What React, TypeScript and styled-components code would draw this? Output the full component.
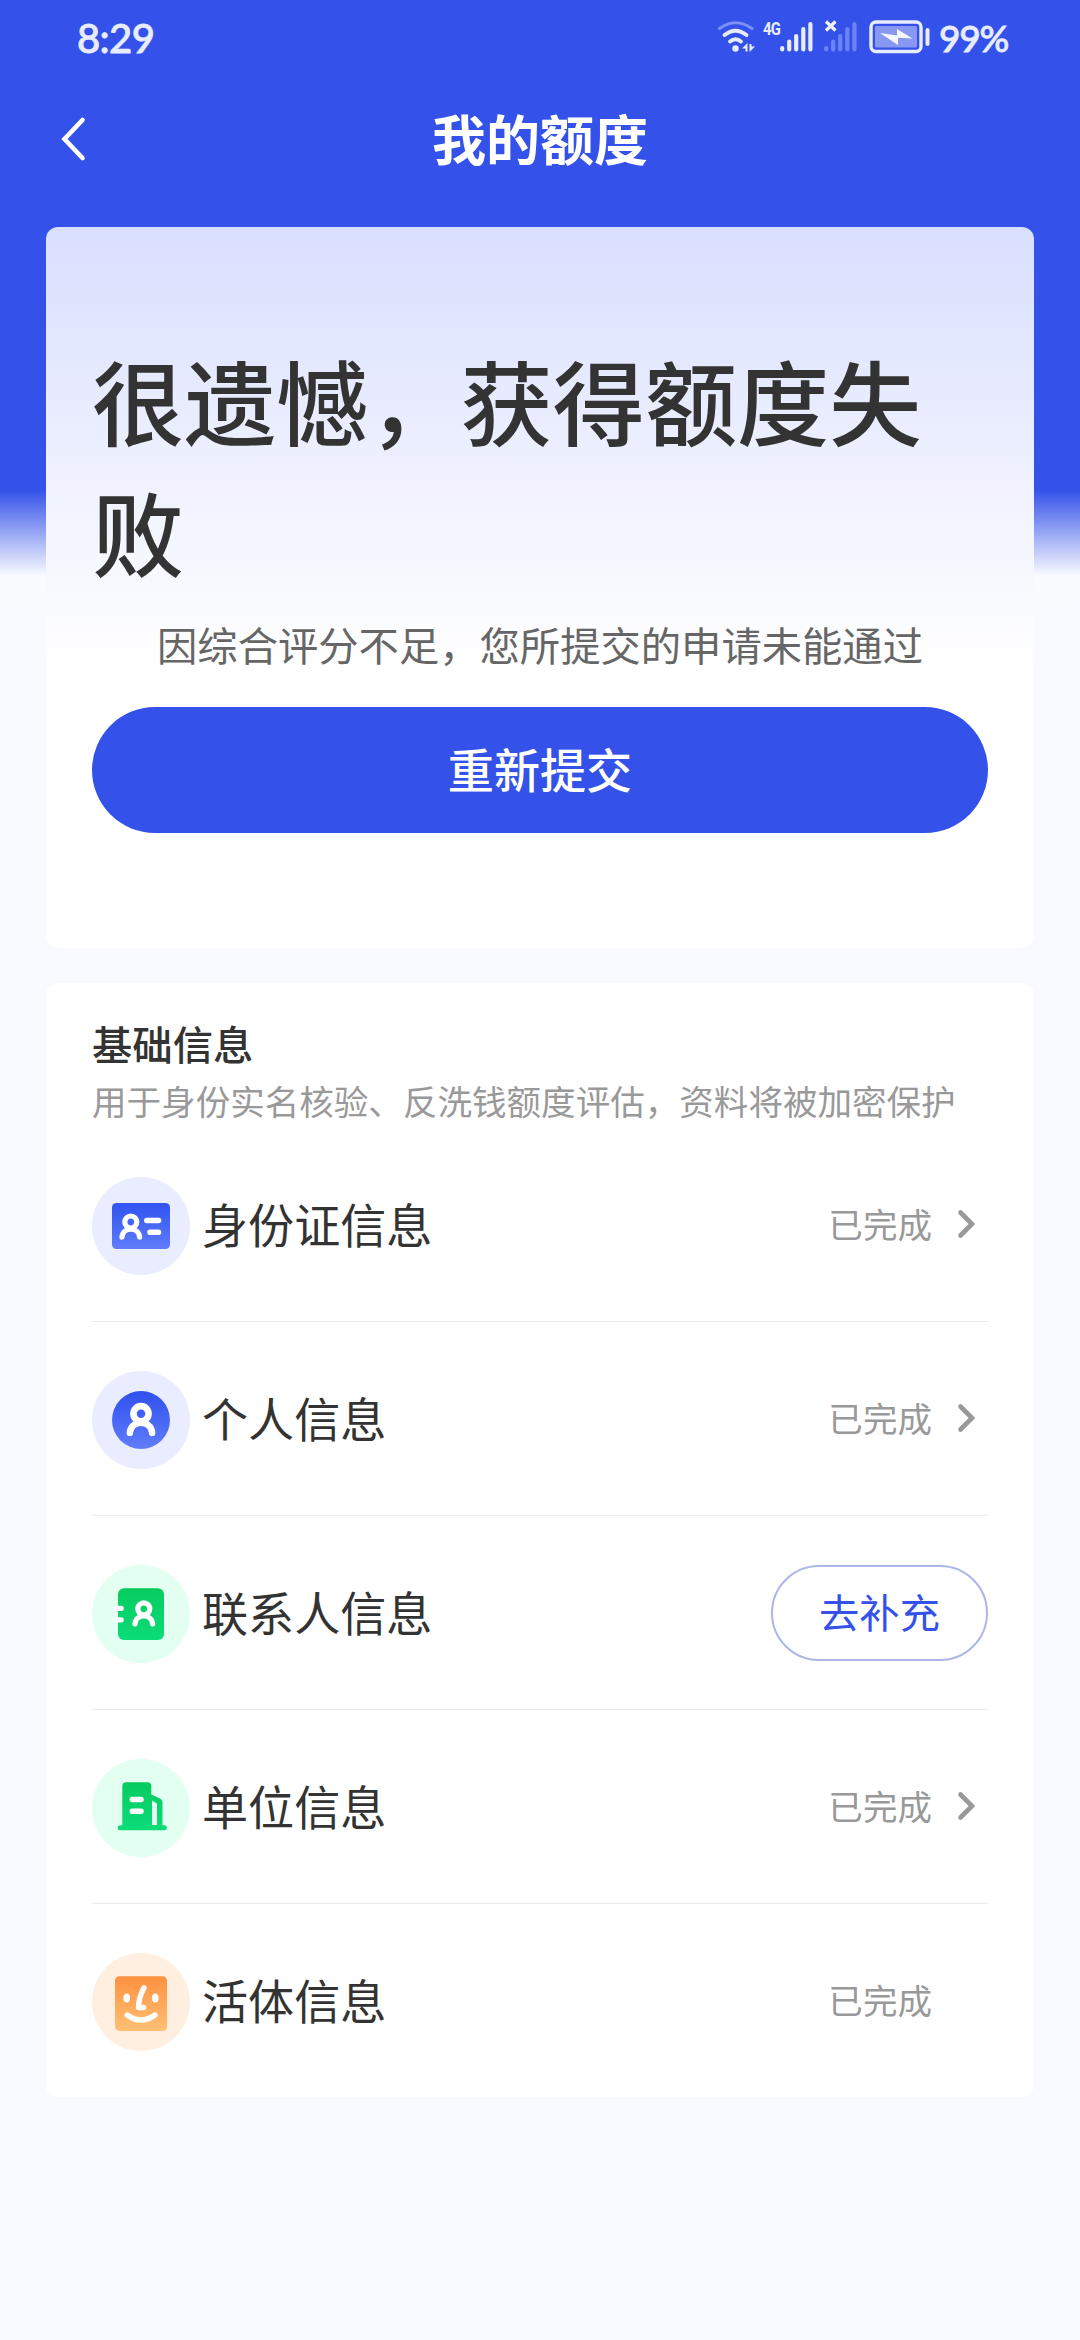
import React from "react";
import styled, { createGlobalStyle } from "styled-components";

const cjk = `"Noto Sans CJK SC", "Noto Sans", sans-serif`;
const blue = "#3452ea";

const GlobalStyle = createGlobalStyle`
  * { box-sizing: border-box; }
  body {
    margin: 0;
    background: #f9faff;
    font-family: ${cjk};
  }
`;

const Page = styled.div`
  width: 1080px;
  height: 2340px;
  overflow: hidden;
  background: linear-gradient(to bottom, ${blue} 0, ${blue} 490px, #fafbff 576px, #f9faff 620px);
`;

const StatusBar = styled.header`
  height: 72px;
  padding: 0 72px 0 77px;
  display: flex;
  justify-content: space-between;
  align-items: center;
  color: #e8ecff;
`;

const Clock = styled.span`
  font: 500 40px/72px Lato, ${cjk};
  padding-top: 3px;
  letter-spacing: -0.6px;
  -webkit-text-stroke: 0.8px currentColor;
`;

const StatusIcons = styled.div`
  padding-top: 1px;
  display: flex;
  align-items: center;
`;

const Percent = styled.span`
  width: 69px;
  margin-left: 9px;
  padding-top: 3px;
  font: 500 37px/72px Lato, ${cjk};
  letter-spacing: -1.2px;
  white-space: nowrap;
  -webkit-text-stroke: 0.8px currentColor;
`;

const NavBar = styled.nav`
  height: 155px;
  padding: 0 60px 19px;
  display: grid;
  grid-template-columns: 60px 1fr 60px;
  align-items: center;
`;

const BackButton = styled.button`
  width: 60px;
  height: 60px;
  padding: 0 0 2px;
  border: 0;
  background: none;
  display: flex;
  align-items: center;
`;

const PageTitle = styled.h1`
  margin: 0;
  padding-bottom: 4px;
  text-align: center;
  color: #fff;
  font-size: 54px;
  font-weight: 700;
  line-height: 132px;
`;

const Card = styled.section`
  margin: 0 46px;
  border-radius: 12px;
  background: #fff;
`;

const ResultCard = styled(Card)`
  height: 721px;
  padding: 107px 46px 0;
  background: linear-gradient(to bottom, #d9dffe 0%, #fff 61%);
`;

const ResultTitle = styled.h2`
  margin: 0;
  color: #333;
  font-size: 92.16px;
  font-weight: 500;
  line-height: 130.5px;
`;

const ResultReason = styled.p`
  margin: 21px 0 0;
  color: #666;
  font-size: 40.32px;
  line-height: 56px;
  text-align: center;
`;

const SubmitButton = styled.button`
  width: 100%;
  height: 126px;
  margin-top: 35px;
  padding: 0 0 3px;
  border: 0;
  border-radius: 63px;
  background: ${blue};
  color: #fff;
  font: 500 46.08px/123px ${cjk};
`;

const InfoCard = styled(Card)`
  height: 1114px;
  margin-top: 35px;
  padding: 32px 46px 0;
`;

const SectionTitle = styled.h3`
  margin: 0;
  color: #333;
  font-size: 40.32px;
  font-weight: 500;
  line-height: 56px;
`;

const SectionNote = styled.p`
  margin: 4px 0 0;
  color: #999;
  font-size: 34.56px;
  line-height: 50px;
  white-space: nowrap;
`;

const List = styled.ul`
  margin: 3px 0 0;
  padding: 0;
  list-style: none;
`;

const Row = styled.li`
  height: 194px;
  padding-top: 2px;
  display: flex;
  align-items: center;
  border-bottom: 1px solid #e9e9ec;
  &:last-child { border-bottom-color: transparent; }
`;

const IconDisc = styled.span<{ $tint: string }>`
  width: 98px;
  height: 98px;
  flex: none;
  border-radius: 50%;
  background: ${(p) => p.$tint};
  svg { display: block; }
`;

const RowLabel = styled.span`
  flex: 1;
  padding-left: 12px;
  padding-bottom: 5px;
  color: #333;
  font-size: 46.08px;
  line-height: 64px;
`;

const RowStatus = styled.span`
  padding-bottom: 5px;
  color: #999;
  font-size: 34.56px;
  line-height: 50px;
`;

const ChevronSlot = styled.span`
  width: 56px;
  height: 30px;
  display: flex;
  padding-left: 24px;
  margin-top: -3px;
`;

const FillButton = styled.button`
  width: 217px;
  height: 96px;
  margin-top: -2px;
  padding: 0 0 4px;
  border: 2px solid #acb6ea;
  border-radius: 48px;
  background: #fff;
  color: ${blue};
  font: 400 40.32px/88px ${cjk};
`;

const Wifi = () => (
  <svg width="38" height="34" viewBox="-0.5 0 38 34" fill="none" stroke="#e8ecff" strokeLinecap="round">
    <path d="M2 8.500Q18 -3 34.500 8.500" stroke="#7e92f5" strokeWidth="3" />
    <path d="M7 15Q18 6.500 29 15" strokeWidth="3.800" />
    <path d="M12.500 21.500Q18 17 23.500 21.500" strokeWidth="3.800" />
    <circle cx="18" cy="28.500" r="3.200" fill="#e8ecff" stroke="none" />
    <path d="M24.500 28.500L30 23V31.500H28V28.500ZM37.500 26.500L32 32V24H34V26.500Z" fill="#e8ecff" stroke="none" />
  </svg>
);

const FourG = styled.span`
  width: 18px;
  height: 34px;
  margin-left: 8px;
  font: 700 19px/17px "Roboto", sans-serif;
  letter-spacing: -1px;
  transform: scaleX(0.78);
  transform-origin: left;
`;

const Bars = ({ color }: { color: string }) => (
  <g stroke={color} strokeWidth="4.200" strokeLinecap="round">
    <path d="M2.200 28V29.500M9.200 21.500V29.500M16.200 16V29.500M23.300 9V29.500M30.400 4V29.500" />
  </g>
);

const SignalSvg = styled.svg<{ $gap: number }>`
  margin-left: ${(p) => p.$gap}px;
`;

const Battery = () => (
  <SignalSvg $gap={12} width="61" height="34" viewBox="0 0 61 34">
    <rect x="2" y="2" width="50" height="29.500" rx="5" fill="none" stroke="#e8ecff" strokeWidth="3.400" />
    <rect x="6" y="6" width="42" height="21.500" rx="1.500" fill="#8797f2" />
    <path d="M11 13L28 15.500V9L43.500 18.500L29 17.800V25Z" fill="#f7f8ff" />
    <path d="M58.500 10V24" stroke="#e8ecff" strokeWidth="4" strokeLinecap="round" />
  </SignalSvg>
);

const Person = ({ x, y, s = 1 }: { x: number; y: number; s?: number }) => (
  <g transform={`translate(${x} ${y}) scale(${s})`} fill="none" stroke="#fff" strokeWidth="5.200" strokeLinecap="round">
    <circle r="6" />
    <path d="M-8.800 15.200C-8.200 4.500 8.200 4.500 8.800 15.200" />
  </g>
);

const IdCardIcon = () => (
  <svg width="98" height="98" viewBox="0 0 98 98">
    <linearGradient id="idFill" x2="0" y2="1">
      <stop stopColor="#3153f0" />
      <stop offset="1" stopColor="#5f7cfb" />
    </linearGradient>
    <rect x="20" y="26" width="58" height="46" rx="4.500" fill="url(#idFill)" />
    <Person x={38.800} y={45} />
    <path d="M54.800 43.500H66.500M58 55.200H66.500" stroke="#fff" strokeWidth="5.600" strokeLinecap="round" />
  </svg>
);

const PersonIcon = () => (
  <svg width="98" height="98" viewBox="0 0 98 98">
    <linearGradient id="personFill" x2="0" y2="1">
      <stop stopColor="#2f50ee" />
      <stop offset="1" stopColor="#607dfb" />
    </linearGradient>
    <circle cx="49" cy="49" r="29" fill="url(#personFill)" />
    <Person x={49} y={42.700} s={1.260} />
  </svg>
);

const ContactsIcon = () => (
  <svg width="98" height="98" viewBox="0 0 98 98">
    <linearGradient id="contactFill" x2="0" y2="1">
      <stop stopColor="#08cb5f" />
      <stop offset="1" stopColor="#0bdc7a" />
    </linearGradient>
    <rect x="26" y="23.300" width="46" height="51.700" rx="6" fill="url(#contactFill)" />
    <Person x={51.800} y={43.800} />
    <path d="M24 43.300H29.200M24 54.800H29.200" stroke="#fff" strokeWidth="5.200" strokeLinecap="round" />
  </svg>
);

const BuildingIcon = () => (
  <svg width="98" height="98" viewBox="0 0 98 98">
    <linearGradient id="buildFill" x2="0" y2="1">
      <stop stopColor="#08cb5f" />
      <stop offset="1" stopColor="#0bdc7a" />
    </linearGradient>
    <path
      d="M34.300 23.300H55.300Q59.300 23.300 59.300 27.300V35.500L68.500 39.800Q70.500 41 70.500 43V66.300H72.300A2.500 2.500 0 0 1 72.300 71.300H28.200A2.500 2.500 0 0 1 28.200 66.300H30.300V27.300Q30.300 23.300 34.300 23.300Z"
      fill="url(#buildFill)"
    />
    <path d="M60 41.500L65 44.500V66H60Z" fill="#e2fff1" />
    <path d="M40.300 40.400H49M40.300 52.200H49" stroke="#fff" strokeWidth="5.500" strokeLinecap="round" />
  </svg>
);

const FaceIcon = () => (
  <svg width="98" height="98" viewBox="0 0 98 98">
    <linearGradient id="faceFill" x2="0" y2="1">
      <stop stopColor="#ff9140" />
      <stop offset="1" stopColor="#ffc075" />
    </linearGradient>
    <rect x="23" y="23.300" width="52" height="54.700" rx="4.500" fill="url(#faceFill)" />
    <ellipse cx="34.700" cy="45" rx="3.300" ry="4.600" fill="#fff" />
    <ellipse cx="63.300" cy="45" rx="3.300" ry="4.600" fill="#fff" />
    <g fill="none" stroke="#fff" strokeWidth="5.400" strokeLinecap="round" strokeLinejoin="round">
      <path d="M52 34.800Q46.500 45 46.500 54.500H51.500" />
      <path d="M35.200 62Q49 72 63 62" />
    </g>
  </svg>
);

const Chevron = () => (
  <svg width="26" height="30" viewBox="0 0 26 30" fill="none" stroke="#999" strokeWidth="4.600" strokeLinecap="round" strokeLinejoin="miter">
    <path d="M4.500 3.500L16 15L4.500 26.500" />
  </svg>
);

const rows = [
  { label: "身份证信息", tint: "#e9edff", icon: <IdCardIcon />, done: true, link: true },
  { label: "个人信息", tint: "#e9edff", icon: <PersonIcon />, done: true, link: true },
  { label: "联系人信息", tint: "#e2fff1", icon: <ContactsIcon />, done: false, link: false },
  { label: "单位信息", tint: "#e2fff1", icon: <BuildingIcon />, done: true, link: true },
  { label: "活体信息", tint: "#ffefe0", icon: <FaceIcon />, done: true, link: false },
];

export default function App() {
  return (
    <Page>
      <GlobalStyle />
      <StatusBar>
        <Clock>8:29</Clock>
        <StatusIcons>
          <Wifi />
          <FourG>4G</FourG>
          <SignalSvg $gap={-1} width="33" height="34" viewBox="0 0 33 34">
            <Bars color="#e8ecff" />
          </SignalSvg>
          <SignalSvg $gap={11} width="33" height="34" viewBox="0 0 33 34">
            <Bars color="#6c83f4" />
            <path d="M2 1.500L11.500 10.500M11.500 1.500L2 10.500" stroke="#f1f3ff" strokeWidth="3.200" />
          </SignalSvg>
          <Battery />
          <Percent>99%</Percent>
        </StatusIcons>
      </StatusBar>
      <NavBar>
        <BackButton aria-label="返回">
          <svg width="30" height="48" viewBox="0 0 30 48" fill="none" stroke="#fff" strokeWidth="4.600" strokeLinecap="round">
            <path d="M22.500 5L4.500 24L22.500 43" />
          </svg>
        </BackButton>
        <PageTitle>我的额度</PageTitle>
      </NavBar>
      <ResultCard>
        <ResultTitle>很遗憾，获得额度失败</ResultTitle>
        <ResultReason>因综合评分不足，您所提交的申请未能通过</ResultReason>
        <SubmitButton>重新提交</SubmitButton>
      </ResultCard>
      <InfoCard>
        <SectionTitle>基础信息</SectionTitle>
        <SectionNote>用于身份实名核验、反洗钱额度评估，资料将被加密保护</SectionNote>
        <List>
          {rows.map((row) => (
            <Row key={row.label}>
              <IconDisc $tint={row.tint}>{row.icon}</IconDisc>
              <RowLabel>{row.label}</RowLabel>
              {row.done ? (
                <>
                  <RowStatus>已完成</RowStatus>
                  <ChevronSlot>{row.link && <Chevron />}</ChevronSlot>
                </>
              ) : (
                <FillButton>去补充</FillButton>
              )}
            </Row>
          ))}
        </List>
      </InfoCard>
    </Page>
  );
}
